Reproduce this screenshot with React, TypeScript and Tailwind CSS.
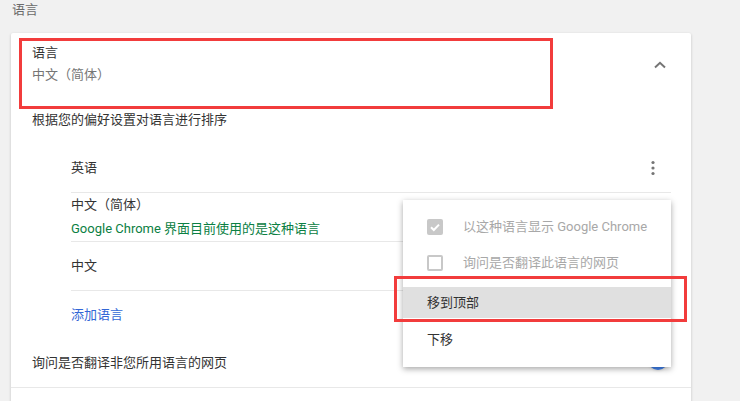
import React from "react";

const font = { fontFamily: 'Roboto, "Noto Sans CJK SC", "Noto Sans", sans-serif' };

function Chevron() {
  return (
    <svg width="12" height="8" viewBox="0 0 12 8" className="block">
      <path d="M1 6.5 L6 1.8 L11 6.5" fill="none" stroke="#757575" strokeWidth="2" />
    </svg>
  );
}

function Dots() {
  return (
    <svg width="4" height="16" viewBox="0 0 4 16" className="block">
      <circle cx="2" cy="2.5" r="1.6" fill="#757575" />
      <circle cx="2" cy="8" r="1.6" fill="#757575" />
      <circle cx="2" cy="13.5" r="1.6" fill="#757575" />
    </svg>
  );
}

export default function App() {
  return (
    <div
      className="relative w-[740px] h-[401px] overflow-hidden bg-[#f1f1f1] text-[13px] leading-[20px]"
      style={font}
    >
      <div className="h-[33px] pl-[12px] text-[#6b6b6b]">语言</div>

      <div className="ml-[11px] w-[680px] bg-white rounded-t-[2px] shadow-[0_1px_3px_rgba(0,0,0,0.2)]">
        <div className="h-[77px] pl-[21px] pr-[25px] pt-[10px] flex items-start justify-between">
          <div className="flex flex-col gap-[2px]">
            <div className="text-[#333]">语言</div>
            <div className="text-[#757575]">中文（简体）</div>
          </div>
          <div className="pt-[18px]">
            <Chevron />
          </div>
        </div>

        <div className="pl-[21px] text-[#333]">根据您的偏好设置对语言进行排序</div>

        <div className="mt-[14px] ml-[60px] mr-[20px]">
          <div className="h-[49px] flex items-center justify-between border-b border-[#e8e8e8] text-[#333]">
            <span className="pb-[1px]">英语</span>
            <span className="pr-[16px]">
              <Dots />
            </span>
          </div>
          <div className="h-[49px] flex flex-col justify-center gap-[4px] border-b border-[#e8e8e8]">
            <span className="text-[#333]">中文（简体）</span>
            <span className="text-[#0b8043]">Google Chrome 界面目前使用的是这种语言</span>
          </div>
          <div className="h-[49px] flex items-center border-b border-[#e8e8e8] text-[#333]">
            <span>中文</span>
          </div>
          <div className="h-[48px] flex items-center text-[#3367d6]">
            <span>添加语言</span>
          </div>
        </div>

        <div className="h-[49px] pl-[21px] pr-[26px] flex items-center justify-between border-b border-[#e8e8e8] text-[#333]">
          <span>询问是否翻译非您所用语言的网页</span>
          <span className="relative mb-[6px] w-[34px] h-[14px] rounded-full bg-[#a1c2fa]">
            <span className="absolute right-[-3px] top-[-3px] w-[20px] h-[20px] rounded-full bg-[#4285f4] shadow" />
          </span>
        </div>
        <div className="h-[20px]" />
      </div>

      {/* Dropdown menu */}
      <div className="absolute left-[403px] top-[200px] w-[268px] h-[167px] bg-white shadow-[0_2px_6px_rgba(0,0,0,0.35)] pt-[9px]">
        <div className="h-[36px] flex items-center pl-[24px] gap-[20px] text-[#a8a8a8]">
          <span className="w-[16px] h-[16px] rounded-[2px] bg-[#c8c8c8] flex items-center justify-center">
            <svg width="12" height="12" viewBox="0 0 12 12">
              <path d="M2 6.2 L4.8 9 L10 3.6" fill="none" stroke="#fff" strokeWidth="2" />
            </svg>
          </span>
          <span>以这种语言显示 Google Chrome</span>
        </div>
        <div className="h-[36px] flex items-center pl-[24px] gap-[20px] text-[#a8a8a8]">
          <span className="w-[16px] h-[16px] rounded-[2px] border-2 border-[#c8c8c8]" />
          <span>询问是否翻译此语言的网页</span>
        </div>
        <div className="mt-[6px] h-[31px] flex items-center pl-[24px] bg-[#e0e0e0] text-[#333]">
          移到顶部
        </div>
        <div className="h-[44px] flex items-center pl-[24px] text-[#333]">下移</div>
      </div>

      {/* Annotation boxes */}
      <div className="absolute left-[19px] top-[38px] w-[534px] h-[71px] border-[3px] border-[#f23c3c]" />
      <div className="absolute left-[394px] top-[276px] w-[293px] h-[46px] border-[3px] border-[#f23c3c]" />
    </div>
  );
}
